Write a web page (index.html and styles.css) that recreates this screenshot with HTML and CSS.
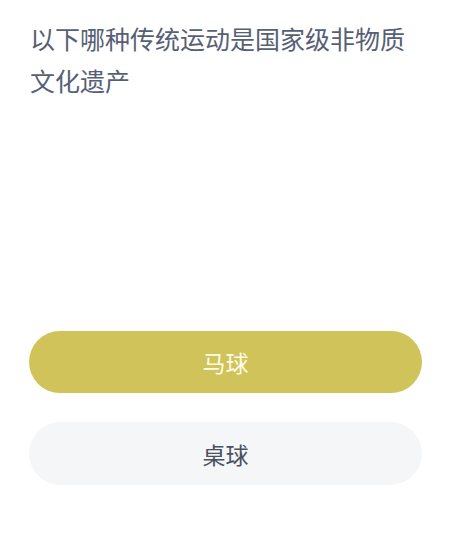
FILE: index.html
```html
<!DOCTYPE html>
<html lang="zh-CN">
<head>
    <meta charset="UTF-8">
    <meta name="viewport" content="width=device-width, initial-scale=1.0">
    <title>答题</title>
    <link rel="stylesheet" href="styles.css">
</head>
<body>
    <div class="quiz">
        <h1 class="question">以下哪种传统运动是国家级非物质文化遗产</h1>

        <div class="options">
            <button class="option option-active">马球</button>
            <button class="option">桌球</button>
        </div>
    </div>
</body>
</html>
```

FILE: styles.css
```css
body {
    margin: 0;
    padding: 0;
    background-color: #fff;
    font-family: "Noto Sans CJK SC", "Noto Sans", sans-serif;
}

.quiz {
    padding: 17px 29px 0 29px;
}

.question {
    margin: 0 0 230px 1px;
    font-size: 25px;
    font-weight: 400;
    line-height: 42px;
    color: #566074;
}

.options {
    display: flex;
    flex-direction: column;
    gap: 29px;
}

.option {
    display: block;
    width: 100%;
    height: 63px;
    border: none;
    border-radius: 32px;
    background-color: #f4f6f8;
    color: #4a5162;
    font-family: inherit;
    font-size: 23px;
    cursor: pointer;
}

.option-active {
    height: 62px;
    background-color: #cfc35a;
    color: #fffbe8;
}
```
